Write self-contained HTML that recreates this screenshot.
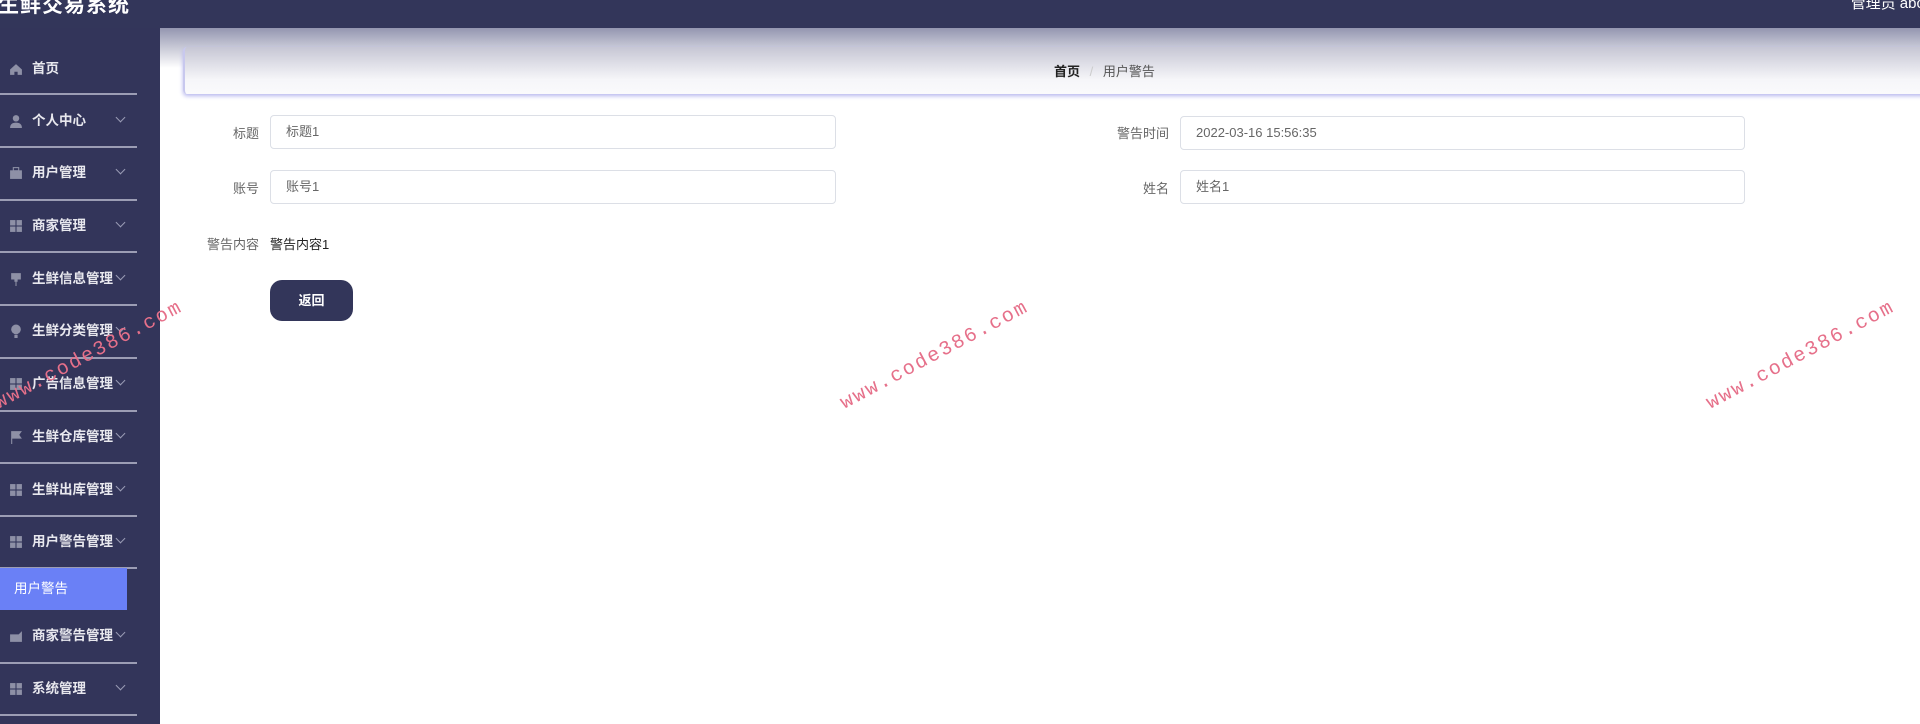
<!DOCTYPE html>
<html><head><meta charset="utf-8">
<style>
*{margin:0;padding:0;box-sizing:border-box}
body{width:1920px;height:724px;overflow:hidden;background:#fff;font-family:"Liberation Sans","Noto Sans CJK SC",sans-serif;position:relative}
.top{position:absolute;left:0;top:0;width:1920px;height:28px;background:#33365a}
.title{position:absolute;left:-2px;top:-11px;color:#fff;font-size:21px;font-weight:bold;letter-spacing:1px}
.user{position:absolute;right:-4px;top:-8px;color:#fff;font-size:15px}
.side{position:absolute;left:0;top:28px;width:160px;height:696px;background:#33355a}
.it{position:absolute;left:0;width:137px;height:20px;color:#e8e8ee;font-size:13.5px;font-weight:bold}
.it .ic{position:absolute;left:9px;top:3px;width:14px;height:14px}
.it span{position:absolute;left:32px;top:0;line-height:20px}
.it .cv{position:absolute;left:117px;top:3px;width:7px;height:7px;border-right:1px solid #9a9cb5;border-bottom:1px solid #9a9cb5;transform:rotate(45deg)}
.sep{position:absolute;left:0;width:137px;height:2px;background:#9c9db4}
.sub{position:absolute;left:0;top:568px;width:127px;height:42px;background:#6a80f6;color:#fff;font-size:13.5px;line-height:42px;padding-left:14px}
.grad{position:absolute;left:160px;top:28px;width:1760px;height:40px;background:linear-gradient(#9496b0,#fff)}
.bc{position:absolute;left:183px;top:47px;width:1760px;height:47px;border-radius:4px;background:linear-gradient(#c6c6d4,#f6f6f9 70%,#fafafc);box-shadow:0 2px 4px #b6b6ee;border-left:2px solid #c8c8ee}
.bct{position:absolute;left:1054px;top:61px;font-size:13px;color:#555}
.bct b{color:#222}
.lab{position:absolute;font-size:13px;color:#666;text-align:right;width:100px}
.inp{position:absolute;height:34px;border:1px solid #dcdfe6;border-radius:4px;font-size:13px;color:#666;line-height:32px;padding-left:15px;background:#fff}
.btn{position:absolute;left:270px;top:280px;width:83px;height:41px;border-radius:12px;background:#33365a;color:#fff;font-size:13px;font-weight:bold;text-align:center;line-height:41px}
.wm{position:absolute;font-family:"Liberation Mono",monospace;font-size:20px;color:#e6708a;transform:rotate(-28deg);transform-origin:left bottom;letter-spacing:2px;white-space:nowrap;line-height:24px}
</style></head><body>
<div class="top"><div class="title">生鲜交易系统</div><div class="user">管理员 abc</div></div>
<div class="side"></div>
<div class="grad"></div>
<div class="bc"></div>
<div class="bct"><b>首页</b> <span style="color:#ccc;margin:0 6px">/</span> 用户警告</div>

<div class="it" style="top:59px"><svg class="ic" viewBox="0 0 13 13"><path d="M1 7L6.5 2 12 7V12H8V9H5V12H1Z" fill="#8e90a6"/></svg><span>首页</span></div>
<div class="sep" style="top:93px"></div>
<div class="it" style="top:111px"><svg class="ic" viewBox="0 0 13 13"><circle cx="6.5" cy="4" r="3" fill="#8e90a6"/><path d="M1 13Q1 8 6.5 8 12 8 12 13Z" fill="#8e90a6"/></svg><span>个人中心</span><i class="cv"></i></div>
<div class="sep" style="top:146px"></div>
<div class="it" style="top:163px"><svg class="ic" viewBox="0 0 13 13"><rect x="1" y="4" width="11" height="8" fill="#8e90a6"/><rect x="4" y="1.5" width="5" height="3" fill="none" stroke="#8e90a6"/></svg><span>用户管理</span><i class="cv"></i></div>
<div class="sep" style="top:199px"></div>
<div class="it" style="top:216px"><svg class="ic" viewBox="0 0 13 13"><g fill="#8e90a6"><rect x="1" y="1" width="5" height="5"/><rect x="7" y="1" width="5" height="5"/><rect x="1" y="7" width="5" height="5"/><rect x="7" y="7" width="5" height="5"/></g></svg><span>商家管理</span><i class="cv"></i></div>
<div class="sep" style="top:251px"></div>
<div class="it" style="top:269px"><svg class="ic" viewBox="0 0 13 13"><path d="M2 1H11V7H2ZM5 7H8V9H5ZM6 9H7V13H6Z" fill="#8e90a6"/></svg><span>生鲜信息管理</span><i class="cv"></i></div>
<div class="sep" style="top:304px"></div>
<div class="it" style="top:321px"><svg class="ic" viewBox="0 0 13 13"><circle cx="6.5" cy="5" r="4.5" fill="#8e90a6"/><rect x="5" y="10" width="3" height="3" fill="#8e90a6"/></svg><span>生鲜分类管理</span><i class="cv"></i></div>
<div class="sep" style="top:357px"></div>
<div class="it" style="top:374px"><svg class="ic" viewBox="0 0 13 13"><g fill="#8e90a6"><rect x="1" y="1" width="5" height="5"/><rect x="7" y="1" width="5" height="5"/><rect x="1" y="7" width="5" height="5"/><rect x="7" y="7" width="5" height="5"/></g></svg><span>广告信息管理</span><i class="cv"></i></div>
<div class="sep" style="top:410px"></div>
<div class="it" style="top:427px"><svg class="ic" viewBox="0 0 13 13"><path d="M2 1H12L9.5 4.5 12 8H3V13H2Z" fill="#8e90a6"/></svg><span>生鲜仓库管理</span><i class="cv"></i></div>
<div class="sep" style="top:462px"></div>
<div class="it" style="top:480px"><svg class="ic" viewBox="0 0 13 13"><g fill="#8e90a6"><rect x="1" y="1" width="5" height="5"/><rect x="7" y="1" width="5" height="5"/><rect x="1" y="7" width="5" height="5"/><rect x="7" y="7" width="5" height="5"/></g></svg><span>生鲜出库管理</span><i class="cv"></i></div>
<div class="sep" style="top:515px"></div>
<div class="it" style="top:532px"><svg class="ic" viewBox="0 0 13 13"><g fill="#8e90a6"><rect x="1" y="1" width="5" height="5"/><rect x="7" y="1" width="5" height="5"/><rect x="1" y="7" width="5" height="5"/><rect x="7" y="7" width="5" height="5"/></g></svg><span>用户警告管理</span><i class="cv"></i></div>
<div class="sep" style="top:567px"></div>
<div class="sub">用户警告</div>
<div class="it" style="top:626px"><svg class="ic" viewBox="0 0 13 13"><path d="M1 5H9L12 2V12H1Z" fill="#8e90a6"/></svg><span>商家警告管理</span><i class="cv"></i></div>
<div class="sep" style="top:662px"></div>
<div class="it" style="top:679px"><svg class="ic" viewBox="0 0 13 13"><g fill="#8e90a6"><rect x="1" y="1" width="5" height="5"/><rect x="7" y="1" width="5" height="5"/><rect x="1" y="7" width="5" height="5"/><rect x="7" y="7" width="5" height="5"/></g></svg><span>系统管理</span><i class="cv"></i></div>
<div class="sep" style="top:714px"></div>

<div class="lab" style="left:159px;top:123px">标题</div>
<div class="inp" style="left:270px;top:115px;width:566px">标题1</div>
<div class="lab" style="left:159px;top:178px">账号</div>
<div class="inp" style="left:270px;top:170px;width:566px">账号1</div>
<div class="lab" style="left:159px;top:234px">警告内容</div>
<div style="position:absolute;left:270px;top:234px;font-size:13px;color:#222">警告内容1</div>
<div class="btn">返回</div>

<div class="lab" style="left:1069px;top:123px">警告时间</div>
<div class="inp" style="left:1180px;top:116px;width:565px">2022-03-16 15:56:35</div>
<div class="lab" style="left:1069px;top:178px">姓名</div>
<div class="inp" style="left:1180px;top:170px;width:565px">姓名1</div>

<div class="wm" style="left:2px;top:392px">www.code386.com</div>
<div class="wm" style="left:848px;top:392px">www.code386.com</div>
<div class="wm" style="left:1714px;top:392px">www.code386.com</div>
</body></html>
